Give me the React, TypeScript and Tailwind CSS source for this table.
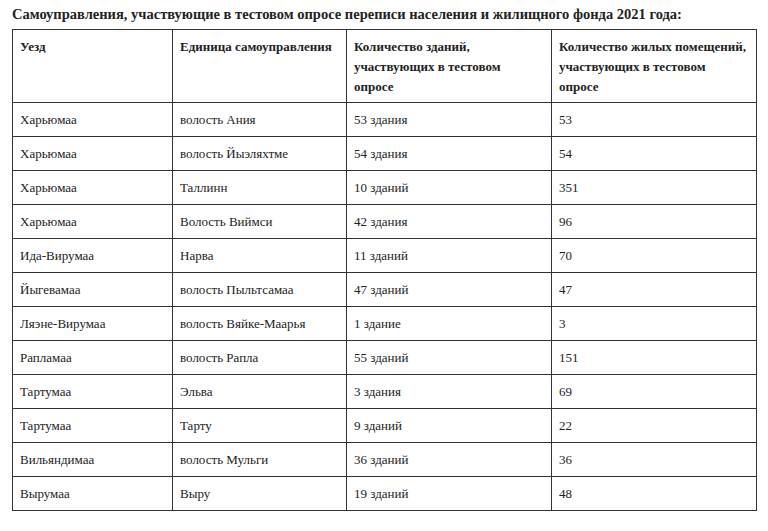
import React from "react";

const rows: [string, string, string, string][] = [
  ["Харьюмаа", "волость Ания", "53 здания", "53"],
  ["Харьюмаа", "волость Йыэляхтме", "54 здания", "54"],
  ["Харьюмаа", "Таллинн", "10 зданий", "351"],
  ["Харьюмаа", "Волость Виймси", "42 здания", "96"],
  ["Ида-Вирумаа", "Нарва", "11 зданий", "70"],
  ["Йыгевамаа", "волость Пыльтсамаа", "47 зданий", "47"],
  ["Ляэне-Вирумаа", "волость Вяйке-Маарья", "1 здание", "3"],
  ["Рапламаа", "волость Рапла", "55 зданий", "151"],
  ["Тартумаа", "Эльва", "3 здания", "69"],
  ["Тартумаа", "Тарту", "9 зданий", "22"],
  ["Вильяндимаа", "волость Мульги", "36 зданий", "36"],
  ["Вырумаа", "Выру", "19 зданий", "48"],
];

export default function App() {
  return (
    <div
      className="w-[768px] h-[531px] bg-white text-[#222] px-[12px] pt-[4px]"
      style={{ fontFamily: '"Liberation Serif", "Times New Roman", serif' }}
    >
      <div className="text-[14.5px] font-bold leading-[20px] h-[25px]">
        Самоуправления, участвующие в тестовом опросе переписи населения и жилищного фонда 2021 года:
      </div>
      <table className="table-fixed border-collapse w-[744px] text-[13px]">
        <colgroup>
          <col className="w-[160px]" />
          <col className="w-[174px]" />
          <col className="w-[205px]" />
          <col className="w-[205px]" />
        </colgroup>
        <thead>
          <tr className="h-[72px]">
            {[
              "Уезд",
              "Единица самоуправления",
              "Количество зданий, участвующих в тестовом опросе",
              "Количество жилых помещений, участвующих в тестовом опросе",
            ].map((h, i) => (
              <th
                key={i}
                className={`border border-[#333] pl-[7px] pt-[7px] pb-[5px] align-top text-left font-bold text-[13px] leading-[20px] ${
                  i === 2 ? "pr-[30px]" : i === 3 ? "pr-[9px]" : "pr-[4px]"
                }`}
              >
                {h}
              </th>
            ))}
          </tr>
        </thead>
        <tbody>
          {rows.map((r, i) => (
            <tr key={i} className="h-[34px]">
              {r.map((c, j) => (
                <td
                  key={j}
                  className="border border-[#333] px-[7px] py-0 align-middle leading-[20px]"
                >
                  {c}
                </td>
              ))}
            </tr>
          ))}
        </tbody>
      </table>
    </div>
  );
}
